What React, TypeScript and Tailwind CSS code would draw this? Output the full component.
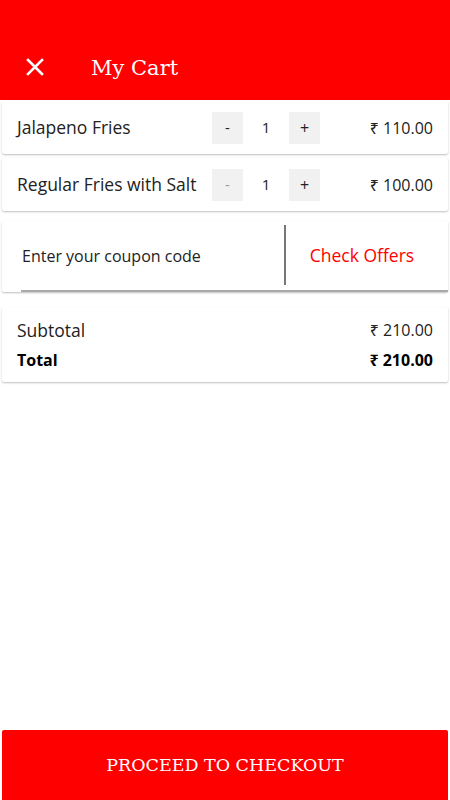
import React from "react";

const sans = { fontFamily: "'Open Sans', 'Noto Sans', sans-serif" };
const serif = { fontFamily: "'DejaVu Serif', 'Liberation Serif', serif" };

function ItemRow({ name, price, dimMinus }: { name: string; price: string; dimMinus?: boolean }) {
  return (
    <div className="mx-[2px] flex h-[53px] items-center rounded-[2px] bg-white shadow-[0_1px_2px_rgba(0,0,0,0.25)]">
      <div className="w-[210px] pl-[15px] text-[17.5px] text-[#222]">{name}</div>
      <div className="flex items-center">
        <div className={`flex h-[32px] w-[31px] items-center justify-center bg-[#f1f1f1] text-[15px] ${dimMinus ? "text-[#999]" : "text-[#222]"}`}>-</div>
        <div className="w-[46px] text-center text-[15px] text-[#222]">1</div>
        <div className="flex h-[32px] w-[31px] items-center justify-center bg-[#f1f1f1] text-[16px] text-[#222]">+</div>
      </div>
      <div className="flex-1 pr-[15px] text-right text-[16px] text-[#222]">{price}</div>
    </div>
  );
}

export default function App() {
  return (
    <div className="flex h-[800px] w-[450px] flex-col bg-white" style={sans}>
      <div className="flex h-[100px] items-end bg-[#ff0000] pb-[17px]">
        <svg className="ml-[26px] mb-[7px]" width="18" height="18" viewBox="0 0 18 18">
          <path d="M2 2 L16 16 M16 2 L2 16" stroke="white" strokeWidth="2.6" strokeLinecap="square" />
        </svg>
        <div className="ml-[47px] text-[21px] leading-[30px] text-white" style={serif}>My Cart</div>
      </div>
      <div className="mt-[1px] flex flex-col gap-[4px]">
        <ItemRow name="Jalapeno Fries" price="₹ 110.00" />
        <ItemRow name="Regular Fries with Salt" price="₹ 100.00" dimMinus />
      </div>
      <div className="mx-[2px] mt-[10px] flex h-[71px] rounded-[2px] bg-white shadow-[0_1px_2px_rgba(0,0,0,0.25)]">
        <div className="ml-[19px] flex w-[263px] items-center border-b-2 border-[#aaa] text-[16px] text-[#222]">
          <span className="ml-[1px]">Enter your coupon code</span>
        </div>
        <div className="flex flex-1 items-center border-b-2 border-[#aaa]">
          <div className="h-[60px] w-[2px] bg-[#777] -mt-[2px]" />
          <div className="flex-1 pr-[10px] text-center text-[17.5px] text-[#ff0000]">Check Offers</div>
        </div>
      </div>
      <div className="mx-[2px] mt-[15px] flex h-[75px] flex-col justify-center gap-[5px] rounded-[2px] bg-white px-[15px] shadow-[0_1px_2px_rgba(0,0,0,0.25)]">
        <div className="flex items-center justify-between text-[#222]">
          <span className="text-[17.5px]">Subtotal</span>
          <span className="text-[16px]">₹ 210.00</span>
        </div>
        <div className="flex items-center justify-between text-[16px] font-bold text-black">
          <span>Total</span>
          <span>₹ 210.00</span>
        </div>
      </div>
      <div className="flex-1" />
      <div className="mx-[2px] flex h-[70px] items-center justify-center rounded-t-[2px] bg-[#ff0000] text-[17.5px] text-white" style={serif}>
        PROCEED TO CHECKOUT
      </div>
    </div>
  );
}
